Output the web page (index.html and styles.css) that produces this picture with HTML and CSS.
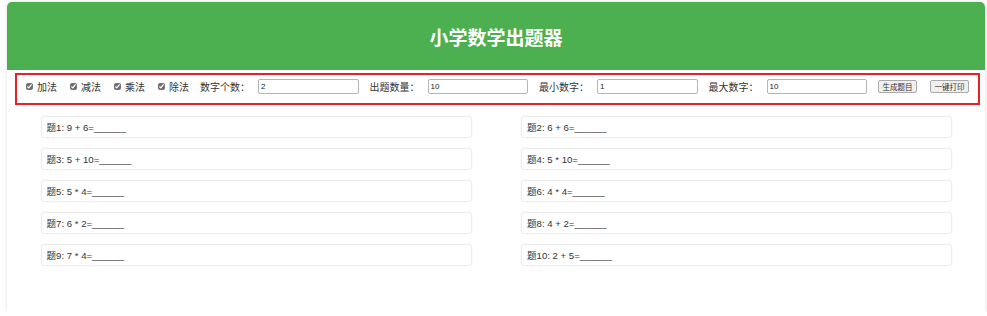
FILE: index.html
```html
<!DOCTYPE html>
<html lang="zh-CN">
<head>
<meta charset="utf-8">
<title>小学数学出题器</title>
<link rel="stylesheet" href="styles.css">
</head>
<body>
<div class="app">
  <header class="header">
    <h1 class="title">小学数学出题器</h1>
  </header>
  <div class="controls">
    <label class="op"><input type="checkbox" checked><span>加法</span></label>
    <label class="op"><input type="checkbox" checked><span>减法</span></label>
    <label class="op"><input type="checkbox" checked><span>乘法</span></label>
    <label class="op"><input type="checkbox" checked><span>除法</span></label>
    <label class="field"><span class="field-label">数字个数：</span><input class="num" type="text" value="2"></label>
    <label class="field"><span class="field-label">出题数量：</span><input class="num" type="text" value="10"></label>
    <label class="field"><span class="field-label">最小数字：</span><input class="num" type="text" value="1"></label>
    <label class="field"><span class="field-label">最大数字：</span><input class="num" type="text" value="10"></label>
    <button class="btn" type="button">生成题目</button>
    <button class="btn" type="button">一键打印</button>
  </div>
  <div class="questions">
    <div class="q">题1: 9 + 6=______</div>
    <div class="q">题2: 6 + 6=______</div>
    <div class="q">题3: 5 + 10=______</div>
    <div class="q">题4: 5 * 10=______</div>
    <div class="q">题5: 5 * 4=______</div>
    <div class="q">题6: 4 * 4=______</div>
    <div class="q">题7: 6 * 2=______</div>
    <div class="q">题8: 4 + 2=______</div>
    <div class="q">题9: 7 * 4=______</div>
    <div class="q">题10: 2 + 5=______</div>
  </div>
</div>
</body>
</html>
```

FILE: styles.css
```css
html, body {
  margin: 0;
  padding: 0;
  background: #ffffff;
}
body {
  font-family: "Liberation Sans", "Noto Sans CJK SC", sans-serif;
  color: #333;
}
.app {
  margin: 2px 2px 0 7px;
  width: 978px;
  height: 310px;
  background: #fff;
  border-radius: 5px 5px 0 0;
  box-shadow: 0 0 4px rgba(0, 0, 0, 0.12);
  box-sizing: border-box;
}
.header {
  height: 68px;
  background: #4caf50;
  border-radius: 5px 5px 0 0;
  display: flex;
  align-items: center;
  justify-content: center;
  padding-top: 1px;
  box-sizing: border-box;
}
.title {
  margin: 0;
  color: #fff;
  font-family: "Noto Sans CJK SC", sans-serif;
  font-size: 19px;
  font-weight: bold;
  line-height: 1;
}
.controls {
  margin: 3px 5px 0 8px;
  border: 2px solid #e8202a;
  padding: 4px 0 9px 9px;
  display: flex;
  align-items: center;
  font-family: "Noto Sans CJK SC", sans-serif;
  font-size: 10px;
  color: #333;
  white-space: nowrap;
}
.op {
  flex: none;
  display: flex;
  align-items: center;
  width: 31px;
  margin-right: 13px;
  line-height: 15px;
}
.op:nth-child(4) {
  margin-right: 11px;
}
.op input {
  flex: none;
  width: 7px;
  height: 7px;
  margin: 0 4px 0 0;
  accent-color: #707070;
}
.field {
  flex: none;
  display: flex;
  align-items: center;
  margin-right: 11px;
  line-height: 15px;
}
.field-label {
  flex: none;
  width: 50px;
  margin-right: 8px;
}
.num {
  flex: none;
  width: 100.5px;
  height: 15px;
  box-sizing: border-box;
  border: 1px solid #b5b5b5;
  border-radius: 2px;
  padding: 0 2px;
  font-family: "Liberation Sans", sans-serif;
  font-size: 8px;
  color: #222;
  margin: 0;
}
.btn {
  flex: none;
  width: 39px;
  height: 13px;
  padding: 0;
  margin: 0 13px 0 0;
  box-sizing: border-box;
  border: 1px solid #a9a9a9;
  border-radius: 2px;
  background: #efefef;
  font-family: "Noto Sans CJK SC", sans-serif;
  font-size: 7.5px;
  line-height: 11px;
  color: #333;
}
.btn + .btn {
  margin-right: 0;
}
.questions {
  margin: 11px 0 0 33.5px;
  display: grid;
  grid-template-columns: 431px 431px;
  column-gap: 49.5px;
  row-gap: 10.5px;
}
.q {
  height: 21.5px;
  box-sizing: border-box;
  border: 1px solid #ededed;
  border-radius: 3px;
  box-shadow: 0 0 2px rgba(0, 0, 0, 0.06);
  padding-left: 5px;
  display: flex;
  align-items: center;
  font-size: 9.6px;
  color: #333;
}
```
